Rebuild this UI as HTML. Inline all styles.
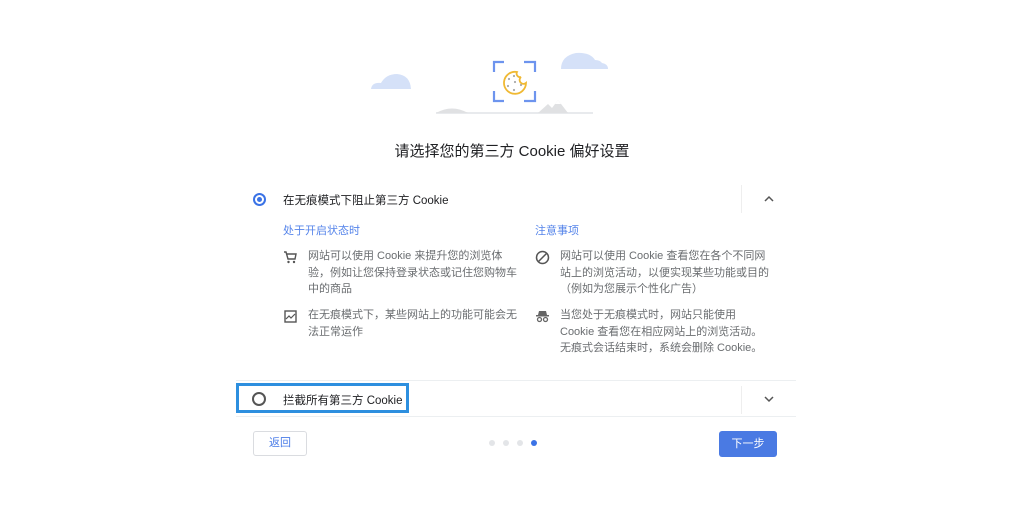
<!DOCTYPE html>
<html><head><meta charset="utf-8"><style>
*{margin:0;padding:0;box-sizing:border-box}
body{width:1024px;height:507px;background:#fff;position:relative;overflow:hidden;font-family:"Liberation Sans","Noto Sans CJK SC",sans-serif;color:#3c4043}
.a{position:absolute;white-space:nowrap}
.t{font-size:11px;color:#6a6d70;line-height:16.5px}
.h{font-size:11px;color:#5584ea}
</style></head><body>
<svg class="a" style="left:0;top:0" width="1024" height="130">
<path d="M371 89 Q372 82 381 83 Q386 74 397 74 Q410 75 411 89 Z" fill="#d5e1f8"/>
<path d="M561 69 Q561 56 576 53 Q590 52 595 60 Q600 60 602 63 Q608 64 608 69 Z" fill="#d5e1f8"/>
<line x1="436" y1="113" x2="593" y2="113" stroke="#e8eaed" stroke-width="2"/>
<path d="M436 113 Q452 104 468 113 Z" fill="#e0e1e3"/>
<path d="M538 113 L548 104 L552 108 L558 100 L568 113 Z" fill="#e0e1e3"/>
<path d="M555 104 L558 100 L561 104 Z" fill="#fff"/>
<g stroke="#6d94ee" stroke-width="2.2" fill="none">
<path d="M494 72 V62 H504"/><path d="M524 62 H535 V72"/><path d="M494 91 V101 H504"/><path d="M524 101 H535 V91"/>
</g>
<path d="M526 83 A11 11 0 1 1 517 72 A3.5 3.5 0 0 0 521 77 A3.5 3.5 0 0 0 526 83 Z" fill="none" stroke="#f0b933" stroke-width="1.8"/>
<g fill="#aaa"><circle cx="509" cy="79" r="1.1"/><circle cx="515" cy="82" r="1.1"/><circle cx="508" cy="86" r="1.1"/><circle cx="521" cy="85" r="1.1"/><circle cx="514" cy="90" r="1.1"/><circle cx="514" cy="76" r="1.1"/></g>
</svg>
<div class="a" style="left:0;width:1024px;top:140px;text-align:center;font-size:15px;color:#202124">请选择您的第三方 Cookie 偏好设置</div>
<div class="a" style="left:253px;top:193px;width:13px;height:13px;border:2px solid #3b73e6;border-radius:50%"><div style="position:absolute;left:2px;top:2px;width:5px;height:5px;border-radius:50%;background:#3b73e6"></div></div>
<div class="a" style="left:283px;top:192px;font-size:11.5px;color:#202124">在无痕模式下阻止第三方 Cookie</div>
<div class="a" style="left:741px;top:185px;width:1px;height:28px;background:#eee"></div>
<svg class="a" style="left:763px;top:195px" width="12" height="8"><path d="M2 6 L6 2 L10 6" fill="none" stroke="#555" stroke-width="1.5"/></svg>
<div class="a h" style="left:283px;top:222px">处于开启状态时</div>
<div class="a h" style="left:535px;top:222px">注意事项</div>
<svg class="a" style="left:283px;top:250px" width="14" height="14"><path d="M1 2 H3 L5 9 H12 L13 4 H4" fill="none" stroke="#555" stroke-width="1.4"/><circle cx="5.5" cy="12" r="1.2" fill="#555"/><circle cx="11" cy="12" r="1.2" fill="#555"/></svg>
<div class="a t" style="left:308px;top:248px">网站可以使用 Cookie 来提升您的浏览体<br>验，例如让您保持登录状态或记住您购物车<br>中的商品</div>
<svg class="a" style="left:284px;top:310px" width="13" height="13"><rect x="1" y="1" width="11" height="11" fill="none" stroke="#555" stroke-width="1.4"/><path d="M2 9 L5 6 L7 8 L11 4" fill="none" stroke="#555" stroke-width="1.2"/></svg>
<div class="a t" style="left:308px;top:307px">在无痕模式下，某些网站上的功能可能会无<br>法正常运作</div>
<svg class="a" style="left:535px;top:250px" width="15" height="15"><circle cx="7.5" cy="7.5" r="6" fill="none" stroke="#555" stroke-width="1.5"/><line x1="3.5" y1="11.5" x2="11.5" y2="3.5" stroke="#555" stroke-width="1.5"/></svg>
<div class="a t" style="left:560px;top:248px">网站可以使用 Cookie 查看您在各个不同网<br>站上的浏览活动，以便实现某些功能或目的<br>（例如为您展示个性化广告）</div>
<svg class="a" style="left:535px;top:309px" width="15" height="14"><path d="M4 2 H11 L12 6 H3 Z" fill="#666"/><rect x="1" y="6" width="13" height="1.5" fill="#666"/><circle cx="4.5" cy="10.5" r="2" fill="none" stroke="#666" stroke-width="1.3"/><circle cx="10.5" cy="10.5" r="2" fill="none" stroke="#666" stroke-width="1.3"/></svg>
<div class="a t" style="left:560px;top:307px">当您处于无痕模式时，网站只能使用<br>Cookie 查看您在相应网站上的浏览活动。<br>无痕式会话结束时，系统会删除 Cookie。</div>
<div class="a" style="left:236px;top:380px;width:560px;height:1px;background:#eceff1"></div>
<div class="a" style="left:236px;top:416px;width:560px;height:1px;background:#eceff1"></div>
<div class="a" style="left:236px;top:383px;width:173px;height:30px;border:3px solid #2d8fdf"></div>
<div class="a" style="left:252px;top:392px;width:14px;height:14px;border:2px solid #555;border-radius:50%"></div>
<div class="a" style="left:283px;top:392px;font-size:11.5px;color:#202124">拦截所有第三方 Cookie</div>
<div class="a" style="left:741px;top:386px;width:1px;height:28px;background:#eee"></div>
<svg class="a" style="left:763px;top:395px" width="12" height="8"><path d="M2 2 L6 6 L10 2" fill="none" stroke="#555" stroke-width="1.5"/></svg>
<div class="a" style="left:253px;top:431px;width:54px;height:25px;border:1px solid #dadce0;border-radius:3px;text-align:center;line-height:23px;font-size:11px;color:#4a7ce8">返回</div>
<div class="a" style="left:489px;top:440px;width:6px;height:6px;border-radius:50%;background:#e3e5e8"></div>
<div class="a" style="left:503px;top:440px;width:6px;height:6px;border-radius:50%;background:#e3e5e8"></div>
<div class="a" style="left:517px;top:440px;width:6px;height:6px;border-radius:50%;background:#e3e5e8"></div>
<div class="a" style="left:531px;top:440px;width:6px;height:6px;border-radius:50%;background:#3b73e6"></div>
<div class="a" style="left:719px;top:431px;width:58px;height:26px;border-radius:3px;background:#4a7ae3;color:#fff;text-align:center;line-height:26px;font-size:11px">下一步</div>
</body></html>
